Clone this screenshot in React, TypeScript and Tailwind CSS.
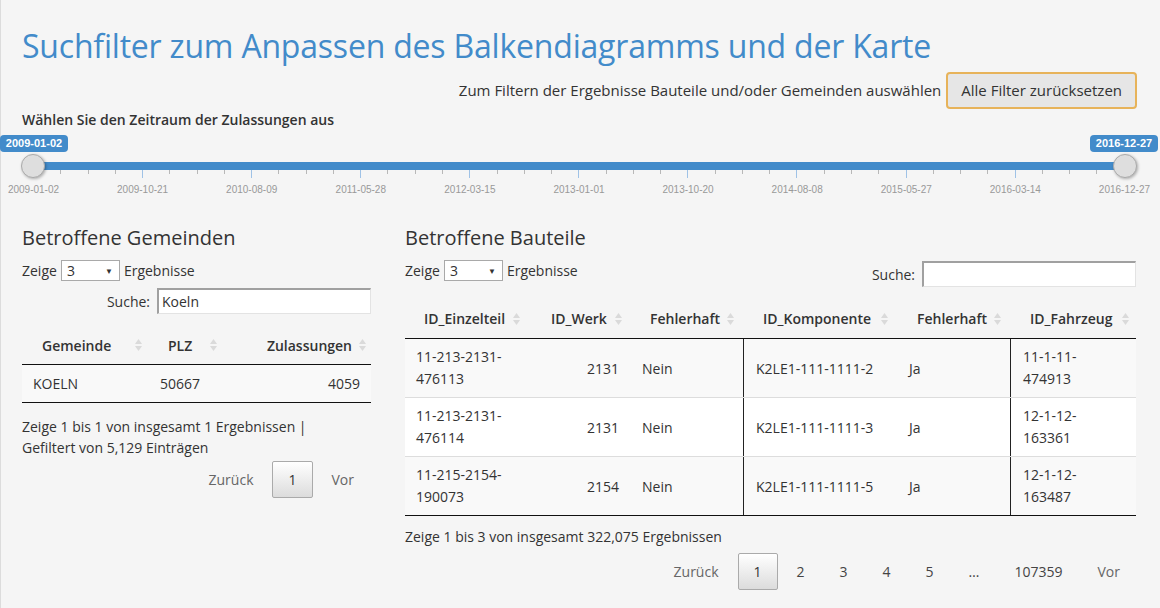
import React from 'react';

const tickLabels = [
  '2009-01-02', '2009-10-21', '2010-08-09', '2011-05-28', '2012-03-15', '2013-01-01',
  '2013-10-20', '2014-08-08', '2015-05-27', '2016-03-14', '2016-12-27',
];

const parts = [
  { a: '11-213-2131-', b: '476113', werk: '2131', komp: 'K2LE1-111-1111-2', fz: ['11-1-11-', '474913'] },
  { a: '11-213-2131-', b: '476114', werk: '2131', komp: 'K2LE1-111-1111-3', fz: ['12-1-12-', '163361'] },
  { a: '11-215-2154-', b: '190073', werk: '2154', komp: 'K2LE1-111-1111-5', fz: ['12-1-12-', '163487'] },
];

const SortIcon = () => (
  <svg width="7" height="12" viewBox="0 0 7 12" className="shrink-0">
    <path d="M3.5 0 L7 5 H0 Z" fill="#dadada" />
    <path d="M3.5 12 L7 7 H0 Z" fill="#dadada" />
  </svg>
);

const LengthSelect = () => (
  <div className="flex items-center gap-[4px] h-[21px] text-[14px]">
    <span>Zeige</span>
    <div className="w-[59px] h-[21px] bg-white border border-[#a9a9a9] flex items-center justify-between pl-[5px] pr-[6px]">
      <span>3</span>
      <span className="text-[8px] text-[#333]">▼</span>
    </div>
    <span>Ergebnisse</span>
  </div>
);

const SearchBox = ({ value }: { value: string }) => (
  <div className="flex items-center gap-[7px] text-[14px]">
    <span>Suche:</span>
    <div className="w-[214px] h-[26px] bg-white border border-[#e3e3e3] border-t-2 border-l-2 border-t-[#a0a0a0] border-l-[#a0a0a0] flex items-center pl-[3px]">
      {value}
    </div>
  </div>
);

const Pager = ({ pages }: { pages: string[] }) => (
  <div className="flex justify-end items-center gap-[3px] text-[14px]">
    <span className="px-[15px] border border-transparent text-[#666]">Zurück</span>
    {pages.map((p, i) =>
      i === 0 ? (
        <span
          key={p}
          className="h-[37px] px-[15px] flex items-center border border-[#aaa] rounded-[2px] bg-gradient-to-b from-white to-[#dcdcdc] text-[#333]"
        >
          {p}
        </span>
      ) : (
        <span key={p + i} className="px-[15px] border border-transparent text-[#444]">
          {p}
        </span>
      )
    )}
    <span className="px-[15px] border border-transparent text-[#666]">Vor</span>
  </div>
);

export default function App() {
  return (
    <div className="min-h-[608px] bg-[#f5f5f5] border-l border-[#dcdcdc] pl-[21px] pr-[23px] text-[#333] font-['Open_Sans',sans-serif]">
      <h1 className="pt-[26px] text-[32px] leading-[40px] text-[#428bca] font-normal tracking-[-0.2px]">
        Suchfilter zum Anpassen des Balkendiagramms und der Karte
      </h1>

      <div className="mt-[6px] h-[37px] flex justify-end items-center gap-[5px]">
        <span className="text-[15px]">Zum Filtern der Ergebnisse Bauteile und/oder Gemeinden auswählen</span>
        <button className="h-[37px] px-[13px] rounded-[4px] border-2 border-[#e7b35a] bg-[#e6e6e6] text-[15px] text-[#333]">
          Alle Filter zurücksetzen
        </button>
      </div>

      <div className="mt-[1px] text-[14px] leading-[20px] font-semibold">
        Wählen Sie den Zeitraum der Zulassungen aus
      </div>

      {/* range slider */}
      <div className="relative mt-[5px] ml-[11px] mr-[12px] pt-[27px] font-['Liberation_Sans',Arial,sans-serif]">
        <div className="absolute left-[-33px] top-0 w-[68px] h-[17px] rounded-[4px] bg-[#428bca] text-white text-[11px] font-bold leading-[17px] text-center">
          2009-01-02
        </div>
        <div className="absolute right-[-33px] top-0 w-[68px] h-[17px] rounded-[4px] bg-[#428bca] text-white text-[11px] font-bold leading-[17px] text-center">
          2016-12-27
        </div>
        <div className="relative h-[8px] bg-[#428bca]">
          <div className="absolute left-[-12px] top-[-8px] w-[24px] h-[24px] rounded-full bg-[#dedede] border border-[#ababab] shadow-[1px_1px_3px_rgba(0,0,0,0.3)]" />
          <div className="absolute right-[-12px] top-[-8px] w-[24px] h-[24px] rounded-full bg-[#dedede] border border-[#ababab] shadow-[1px_1px_3px_rgba(0,0,0,0.3)]" />
        </div>
        <div className="flex justify-between items-start h-[8px]">
          {Array.from({ length: 41 }, (_, i) => (
            <div key={i} className={i % 4 === 0 ? 'w-px h-[8px] bg-[#9fc2e6]' : 'w-px h-[4px] bg-[#b8b8b8]'} />
          ))}
        </div>
        <div className="flex justify-between mt-[5px]">
          {tickLabels.map(l => (
            <div key={l} className="w-px flex justify-center">
              <span className="whitespace-nowrap text-[10px] leading-[14px] text-[#999]">{l}</span>
            </div>
          ))}
        </div>
      </div>

      <div className="mt-[27px] flex gap-[34px]">
        {/* Gemeinden */}
        <div className="w-[349px] shrink-0">
          <h3 className="text-[20px] leading-[28px]">Betroffene Gemeinden</h3>
          <div className="mt-[8px]">
            <LengthSelect />
          </div>
          <div className="mt-[7px] flex justify-end">
            <SearchBox value="Koeln" />
          </div>
          <div className="mt-[12px] text-[14px]">
            <div className="grid grid-cols-[130px_80px_139px] h-[39px] border-b border-[#111] font-semibold">
              <div className="flex items-center justify-between pl-[20px] pr-[10px]">
                <span>Gemeinde</span>
                <SortIcon />
              </div>
              <div className="flex items-center justify-between pl-[16px] pr-[15px]">
                <span>PLZ</span>
                <SortIcon />
              </div>
              <div className="flex items-center justify-end gap-[7px] pr-[5px]">
                <span>Zulassungen</span>
                <SortIcon />
              </div>
            </div>
            <div className="grid grid-cols-[130px_80px_139px] h-[38px] items-center border-b border-[#111] bg-[#f9f9f9]">
              <span className="pl-[11px]">KOELN</span>
              <span className="pl-[8px]">50667</span>
              <span className="text-right pr-[11px]">4059</span>
            </div>
          </div>
          <div className="mt-[13px] text-[14px] leading-[21px]">
            Zeige 1 bis 1 von insgesamt 1 Ergebnissen |<br />
            Gefiltert von 5,129 Einträgen
          </div>
          <div className="mt-[3px] pr-[1px]">
            <Pager pages={['1']} />
          </div>
        </div>

        {/* Bauteile */}
        <div className="w-[731px] shrink-0">
          <h3 className="text-[20px] leading-[28px]">Betroffene Bauteile</h3>
          <div className="mt-[8px] flex justify-between items-start">
            <LengthSelect />
            <div className="mt-[1px]">
              <SearchBox value="" />
            </div>
          </div>
          <div className="mt-[12px] text-[14px]">
            <div className="grid grid-cols-[123px_103px_112px_155px_112px_126px] h-[40px] border-b border-[#111] font-semibold">
              <div className="flex items-center justify-between pl-[19px] pr-[8px]">
                <span>ID_Einzelteil</span>
                <SortIcon />
              </div>
              <div className="flex items-center justify-between pl-[23px] pr-[9px]">
                <span>ID_Werk</span>
                <SortIcon />
              </div>
              <div className="flex items-center justify-between pl-[19px] pr-[9px]">
                <span>Fehlerhaft</span>
                <SortIcon />
              </div>
              <div className="flex items-center justify-between pl-[20px] pr-[10px]">
                <span>ID_Komponente</span>
                <SortIcon />
              </div>
              <div className="flex items-center justify-between pl-[19px] pr-[9px]">
                <span>Fehlerhaft</span>
                <SortIcon />
              </div>
              <div className="flex items-center justify-between pl-[20px] pr-[7px]">
                <span>ID_Fahrzeug</span>
                <SortIcon />
              </div>
            </div>
            {parts.map((p, i) => (
              <div
                key={p.komp}
                className={`grid grid-cols-[123px_103px_112px_155px_112px_126px] h-[59px] items-stretch border-b ${
                  i === parts.length - 1 ? 'border-[#111]' : 'border-[#ddd]'
                } ${i % 2 === 0 ? 'bg-[#f9f9f9]' : 'bg-white'}`}
              >
                <div className="pl-[11px] flex flex-col justify-center leading-[22px]">
                  <span>{p.a}</span>
                  <span>{p.b}</span>
                </div>
                <div className="flex items-center justify-end pr-[12px]">{p.werk}</div>
                <div className="flex items-center pl-[11px]">Nein</div>
                <div className="flex items-center pl-[12px] border-l border-[#222]">{p.komp}</div>
                <div className="flex items-center pl-[11px]">Ja</div>
                <div className="pl-[12px] border-l border-[#222] flex flex-col justify-center leading-[22px]">
                  <span>{p.fz[0]}</span>
                  <span>{p.fz[1]}</span>
                </div>
              </div>
            ))}
          </div>
          <div className="mt-[10px] text-[14px] leading-[21px]">
            Zeige 1 bis 3 von insgesamt 322,075 Ergebnissen
          </div>
          <div className="mt-[6px]">
            <Pager pages={['1', '2', '3', '4', '5', '…', '107359']} />
          </div>
        </div>
      </div>
    </div>
  );
}
